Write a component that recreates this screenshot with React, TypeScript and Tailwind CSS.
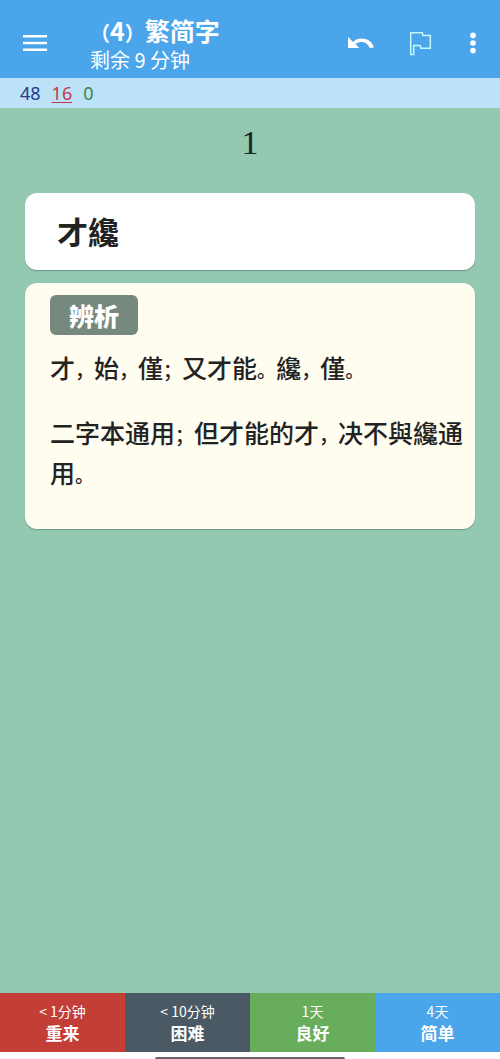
import { Fragment } from 'react';

const counts = { fresh: 48, learning: 16, review: 0 };

const answers = [
  { interval: '< 1分钟', label: '重来', color: 'bg-[#c23e37]' },
  { interval: '< 10分钟', label: '困难', color: 'bg-[#4a5964]' },
  { interval: '1天', label: '良好', color: 'bg-[#68ad5c]' },
  { interval: '4天', label: '简单', color: 'bg-[#4ba5eb]' },
];

const notes = ['才，始，僅；又才能。纔，僅。', '二字本通用；但才能的才，决不與纔通用。'];

// punctuation is set a size smaller than the characters around it
function Prose({ text }: { text: string }) {
  return (
    <p>
      {text.split(/([，；。])/).map((part, i) =>
        i % 2 ? (
          <span key={i} className="text-[19px] leading-none">{part}</span>
        ) : (
          <Fragment key={i}>{part}</Fragment>
        )
      )}
    </p>
  );
}

function Topbar() {
  return (
    <header className="flex h-[78px] shrink-0 items-center bg-[#4ba5eb] pt-2 pr-4 pl-[22px] text-white">
      <button aria-label="菜单" className="shrink-0">
        <svg width="26" height="18" viewBox="0 0 26 18" fill="currentColor">
          <path d="M1 1h24v2.4H1zM1 7.8h24v2.4H1zM1 14.6h24v2.4H1z" />
        </svg>
      </button>
      <div className="ml-[42px] flex-1 pt-1 whitespace-nowrap">
        <h1 className="text-[25px] leading-[30px] font-bold">
          <span className="text-[20px] leading-none">（</span>4<span className="text-[20px] leading-none">）</span>繁简字
        </h1>
        <p className="text-[20px] leading-[30px]">剩余 9 分钟</p>
      </div>
      <div className="flex items-center">
        <button aria-label="撤销" className="mr-8">
          <svg width="30" height="30" viewBox="0 0 30 30" fill="currentColor">
            <path d="M3 8.8v11.2h11.4l-4-3.9c1.8-1.5 3.6-2.2 5.8-2.2 4 0 7.1 2.3 8.6 6l4.1-.4c-1.6-5.6-6.6-8.9-12.4-8.9-3.3 0-6.1 1.2-8.5 3.3z" />
          </svg>
        </button>
        <button aria-label="标记" className="mr-[29px]">
          <svg width="26" height="26" viewBox="0 0 26 26" fill="none" stroke="#c4f8f6" strokeWidth="1.5">
            <path d="M3.7 2.7h11.6l.6 2.7h7.4v12.8h-9.5l-.6-2.8H6.7v9.1h-3z" />
          </svg>
        </button>
        <button aria-label="更多">
          <svg width="22" height="22" viewBox="0 0 22 22" fill="currentColor">
            <circle cx="11" cy="3.4" r="2.8" />
            <circle cx="11" cy="11" r="2.8" />
            <circle cx="11" cy="18.6" r="2.8" />
          </svg>
        </button>
      </div>
    </header>
  );
}

export default function App() {
  return (
    <div className="flex min-h-screen flex-col bg-[#93c9b1] font-['Noto_Sans_CJK_SC',sans-serif] text-[#222]">
      <Topbar />

      <div className="flex h-[30px] shrink-0 items-center gap-[11px] bg-[#bde1f7] px-5 font-['Noto_Sans','Noto_Sans_CJK_SC',sans-serif] text-[18px]">
        <span className="text-[#263c8d]">{counts.fresh}</span>
        <span className="text-[#c03b48] underline decoration-1 underline-offset-2">{counts.learning}</span>
        <span className="text-[#3c8651]">{counts.review}</span>
      </div>

      <main className="flex flex-1 flex-col px-[25px]">
        <p className="pt-[15px] text-center font-['Liberation_Serif',serif] text-[34px] leading-[40px] text-[#14261d]">1</p>

        <section className="mt-[30px] rounded-xl bg-white px-8 pt-4 pb-[18px] shadow-[0_1px_1px_#6c9582]">
          <h2 className="text-[31px] leading-[43px] font-bold">才纔</h2>
        </section>

        <section className="mt-[13px] rounded-xl bg-[#fffdf0] pt-3 pr-2 pb-[37px] pl-[25px] shadow-[0_1px_1px_#6c9582]">
          <h3 className="inline-block rounded-md bg-[#76897f] px-[19px] text-[25px] leading-[40px] font-black text-white">辨析</h3>
          <div className="mt-3 flex flex-col gap-[25px] text-[25px] leading-[40px] font-medium">
            {notes.map((note) => (
              <Prose key={note} text={note} />
            ))}
          </div>
        </section>
      </main>

      <footer className="shrink-0">
        <div className="grid grid-cols-4">
          {answers.map((a) => (
            <button key={a.label} className={`flex h-[59px] flex-col items-center justify-center pb-0.5 text-white ${a.color}`}>
              <span className="text-[14px] leading-[22px]">{a.interval}</span>
              <span className="text-[17px] leading-[22px] font-bold">{a.label}</span>
            </button>
          ))}
        </div>
        <div className="flex h-[7px] items-end justify-center bg-white">
          <div className="h-[2px] w-[38%] rounded-t-sm bg-[#666]" />
        </div>
      </footer>
    </div>
  );
}
